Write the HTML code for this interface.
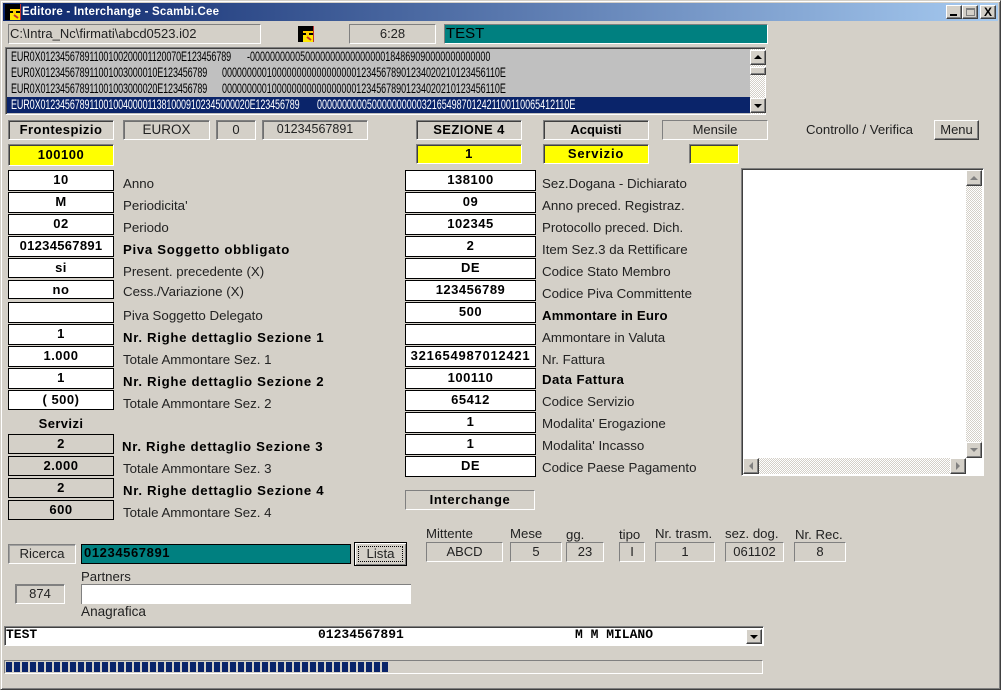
<!DOCTYPE html>
<html><head><meta charset="utf-8"><title>Editore</title>
<style>
html,body{margin:0;padding:0}
body{width:1001px;height:690px;overflow:hidden;background:#d4d0c8;position:relative;font-family:"Liberation Sans",sans-serif;font-size:13px;color:#000}
div,span.a{position:absolute;box-sizing:border-box;white-space:pre}
.s{border:1px solid;border-color:#808080 #fff #fff #808080;box-shadow:inset 1px 1px 0 #404040;text-align:center}
.t{border:1px solid;border-color:#808080 #fff #fff #808080;text-align:center;color:#222}
.b{border:1px solid #000;background:#fff;text-align:center;font-weight:bold;font-size:13px;letter-spacing:.5px;height:21px;line-height:18px;left:8px;width:106px}
.r{left:405px;width:131px;line-height:17px}
.g{background:#d4d0c8;height:20px;line-height:17px}
.y{background:#ff0;font-weight:bold;font-size:13px;letter-spacing:.5px;line-height:18px}
.l{left:123px;font-size:13.3px;line-height:16px;color:#222;margin-top:1px}
.h{font-weight:bold;font-size:13.2px;letter-spacing:.7px;color:#000}
.h2{letter-spacing:.45px}
.m{left:11px;font-size:13.5px;line-height:16px;color:#000;transform:scaleX(.667);transform-origin:0 0}
.f{letter-spacing:-.17px}
.btn{background:#d4d0c8;border:1px solid;border-color:#fff #404040 #404040 #fff;box-shadow:inset -1px -1px 0 #808080}
.tri{width:0;height:0;border-style:solid;border-color:transparent}
.c{background:repeating-conic-gradient(#fff 0 25%,#d4d0c8 0 50%) 0 0/2px 2px}
.lb{top:0;font-size:13.2px;color:#222;line-height:14px}
</style></head><body>

<!-- window frame -->
<div style="left:0;top:0;width:1001px;height:690px;border:1px solid;border-color:#d4d0c8 #404040 #404040 #d4d0c8;box-shadow:inset 1px 1px 0 #fff,inset -1px -1px 0 #808080"></div>
<div style="left:3px;top:3px;width:995px;height:18px;background:linear-gradient(90deg,#0a246a,#a6caf0)"></div>
<svg style="position:absolute;left:5px;top:4px" width="16" height="16" viewBox="0 0 16 16"><rect width="16" height="16" fill="#000"/><rect x="15" width="1" height="16" fill="#c03030"/><rect x="5" y="5" width="10" height="2" fill="#ffd000"/><rect x="5" y="9" width="10" height="7" fill="#ffe800"/><rect x="8" y="7" width="3" height="3" fill="#ffd000"/><path d="M9 11l4 3" stroke="#c03030" stroke-width="2"/></svg>
<div style="left:22px;top:4px;line-height:16px;color:#fff;font-weight:bold;font-size:11.5px;letter-spacing:.2px">Editore - Interchange - Scambi.Cee</div>
<div class="btn" style="left:946px;top:5px;width:16px;height:14px"><div style="left:3px;top:8px;width:7px;height:2px;background:#000"></div></div>
<div class="btn" style="left:962px;top:5px;width:16px;height:14px"><div style="left:3px;top:2px;width:9px;height:8px;border:1px solid #808080;border-top-width:2px"></div></div>
<div class="btn" style="left:980px;top:5px;width:16px;height:14px;font-weight:bold;font-size:12px;line-height:12px;text-align:center">X</div>

<!-- top row -->
<div class="t" style="left:8px;top:24px;width:253px;height:20px;text-align:left;padding-left:1px;line-height:17px;font-size:13px;color:#222">C:\Intra_Nc\firmati\abcd0523.i02</div>
<svg style="position:absolute;left:298px;top:26px" width="16" height="16" viewBox="0 0 16 16"><rect width="16" height="16" fill="#000"/><rect x="15" width="1" height="16" fill="#c03030"/><rect x="5" y="5" width="10" height="2" fill="#ffd000"/><rect x="5" y="9" width="10" height="7" fill="#ffe800"/><rect x="8" y="7" width="3" height="3" fill="#ffd000"/><path d="M9 11l4 3" stroke="#c03030" stroke-width="2"/></svg>
<div class="t" style="left:349px;top:24px;width:87px;height:20px;line-height:17px;font-size:13px">6:28</div>
<div class="t" style="left:444px;top:24px;width:324px;height:20px;background:#008080;text-align:left;padding-left:1px;line-height:18px;font-size:15px;color:#000">TEST</div>

<!-- list -->
<div class="s" style="left:5px;top:47px;width:761px;height:68px;background:#c0c0c0;overflow:hidden">
<div style="left:1px;top:49px;width:743px;height:16px;background:#0a246a"></div>
</div>
<div class="m f" style="top:49px">EUR0X01234567891100100200001120070E123456789</div>
<div class="m" style="top:49px;left:247px">-000000000050000000000000000184869090000000000000</div>
<div class="m f" style="top:65px">EUR0X012345678911001003000010E123456789</div>
<div class="m" style="top:65px;left:222px;letter-spacing:-.05px">00000000010000000000000000012345678901234020210123456110E</div>
<div class="m f" style="top:81px">EUR0X012345678911001003000020E123456789</div>
<div class="m" style="top:81px;left:222px;letter-spacing:-.05px">00000000010000000000000000012345678901234020210123456110E</div>
<div class="m f" style="top:97px;color:#fff">EUR0X0123456789110010040000113810009102345000020E123456789</div>
<div class="m" style="top:97px;left:317px;color:#fff;letter-spacing:-.03px">000000000050000000000321654987012421100110065412110E</div>
<div class="c" style="left:750px;top:49px;width:15px;height:65px"></div>
<div class="btn" style="left:750px;top:50px;width:16px;height:15px"><div class="tri" style="left:3px;top:4px;border-width:0 4px 4px;border-bottom-color:#000"></div></div>
<div class="btn" style="left:750px;top:67px;width:16px;height:8px"></div>
<div class="btn" style="left:750px;top:98px;width:16px;height:15px"><div class="tri" style="left:3px;top:5px;border-width:4px 4px 0;border-top-color:#000"></div></div>

<!-- header row -->
<div class="s" style="left:8px;top:120px;width:106px;height:20px;font-weight:bold;font-size:13px;letter-spacing:.45px;line-height:18px">Frontespizio</div>
<div class="s" style="left:123px;top:120px;width:87px;height:20px;line-height:17px;box-shadow:inset 1px 1px 0 #707070;color:#222;font-size:13.5px">EUROX</div>
<div class="s" style="left:216px;top:120px;width:40px;height:20px;line-height:17px;box-shadow:inset 1px 1px 0 #707070;color:#222">0</div>
<div class="s" style="left:262px;top:120px;width:106px;height:20px;line-height:17px;box-shadow:inset 1px 1px 0 #707070;color:#222;font-size:12.5px">01234567891</div>
<div class="s y" style="left:8px;top:144px;width:106px;height:22px;line-height:19px">100100</div>
<div class="s" style="left:416px;top:120px;width:106px;height:20px;font-weight:bold;font-size:13px;letter-spacing:.4px;line-height:18px">SEZIONE 4</div>
<div class="s" style="left:543px;top:120px;width:106px;height:20px;font-weight:bold;font-size:13px;line-height:18px">Acquisti</div>
<div class="s" style="left:662px;top:120px;width:106px;height:20px;line-height:17px;box-shadow:none;color:#222">Mensile</div>
<div class="s y" style="left:416px;top:144px;width:106px;height:20px">1</div>
<div class="s y" style="left:543px;top:144px;width:106px;height:20px;letter-spacing:.8px">Servizio</div>
<div class="s y" style="left:689px;top:144px;width:50px;height:20px"></div>
<div class="lb" style="left:806px;top:123px">Controllo / Verifica</div>
<div class="btn" style="left:934px;top:120px;width:45px;height:20px;text-align:center;line-height:17px;font-size:13px;color:#222">Menu</div>

<!-- left column -->
<div class="b" style="top:170px">10</div><div class="l" style="top:175px">Anno</div>
<div class="b" style="top:192px">M</div><div class="l" style="top:197px">Periodicita'</div>
<div class="b" style="top:214px">02</div><div class="l" style="top:219px">Periodo</div>
<div class="b" style="top:236px;letter-spacing:.3px">01234567891</div><div class="l h" style="top:241px">Piva Soggetto obbligato</div>
<div class="b" style="top:258px;height:20px">si</div><div class="l" style="top:263px">Present. precedente (X)</div>
<div class="b" style="top:280px;height:19px">no</div><div class="l" style="top:283px">Cess./Variazione (X)</div>
<div class="b" style="top:302px"></div><div class="l" style="top:307px">Piva Soggetto Delegato</div>
<div class="b" style="top:324px">1</div><div class="l h" style="top:329px">Nr. Righe dettaglio Sezione 1</div>
<div class="b" style="top:346px">1.000</div><div class="l" style="top:351px">Totale Ammontare Sez. 1</div>
<div class="b" style="top:368px">1</div><div class="l h" style="top:373px">Nr. Righe dettaglio Sezione 2</div>
<div class="b" style="top:390px;height:20px">( 500)</div><div class="l" style="top:395px">Totale Ammontare Sez. 2</div>
<div style="left:8px;top:416px;width:106px;text-align:center;font-weight:bold;font-size:13px;letter-spacing:.4px;line-height:16px">Servizi</div>
<div class="b g" style="top:434px">2</div><div class="l h" style="top:438px;left:122px">Nr. Righe dettaglio Sezione 3</div>
<div class="b g" style="top:456px">2.000</div><div class="l" style="top:460px">Totale Ammontare Sez. 3</div>
<div class="b g" style="top:478px">2</div><div class="l h" style="top:482px">Nr. Righe dettaglio Sezione 4</div>
<div class="b g" style="top:500px">600</div><div class="l" style="top:504px">Totale Ammontare Sez. 4</div>

<!-- middle column -->
<div class="b r" style="top:170px">138100</div><div class="l" style="left:542px;top:175px">Sez.Dogana - Dichiarato</div>
<div class="b r" style="top:192px">09</div><div class="l" style="left:542px;top:197px">Anno preced. Registraz.</div>
<div class="b r" style="top:214px">102345</div><div class="l" style="left:542px;top:219px">Protocollo preced. Dich.</div>
<div class="b r" style="top:236px">2</div><div class="l" style="left:542px;top:241px">Item Sez.3 da Rettificare</div>
<div class="b r" style="top:258px">DE</div><div class="l" style="left:542px;top:263px">Codice Stato Membro</div>
<div class="b r" style="top:280px">123456789</div><div class="l" style="left:542px;top:285px">Codice Piva Committente</div>
<div class="b r" style="top:302px">500</div><div class="l h h2" style="left:542px;top:307px;letter-spacing:.2px">Ammontare in Euro</div>
<div class="b r" style="top:324px"></div><div class="l" style="left:542px;top:329px">Ammontare in Valuta</div>
<div class="b r" style="top:346px;letter-spacing:.75px">321654987012421</div><div class="l" style="left:542px;top:351px">Nr. Fattura</div>
<div class="b r" style="top:368px">100110</div><div class="l h h2" style="left:542px;top:371px">Data Fattura</div>
<div class="b r" style="top:390px">65412</div><div class="l" style="left:542px;top:393px">Codice Servizio</div>
<div class="b r" style="top:412px">1</div><div class="l" style="left:542px;top:415px">Modalita' Erogazione</div>
<div class="b r" style="top:434px">1</div><div class="l" style="left:542px;top:437px">Modalita' Incasso</div>
<div class="b r" style="top:456px">DE</div><div class="l" style="left:542px;top:459px">Codice Paese Pagamento</div>
<div class="t" style="left:405px;top:490px;width:130px;height:20px;font-weight:bold;font-size:13px;letter-spacing:.65px;line-height:17px;color:#000">Interchange</div>

<!-- right textbox -->
<div class="s" style="left:741px;top:168px;width:243px;height:308px;background:#fff"></div>
<div class="c" style="left:966px;top:170px;width:16px;height:288px"></div>
<div class="btn" style="left:966px;top:170px;width:16px;height:16px"><div class="tri" style="left:3px;top:5px;border-width:0 4px 4px;border-bottom-color:#808080"></div></div>
<div class="btn" style="left:966px;top:442px;width:16px;height:16px"><div class="tri" style="left:3px;top:5px;border-width:4px 4px 0;border-top-color:#808080"></div></div>
<div class="c" style="left:743px;top:458px;width:223px;height:16px"></div>
<div class="btn" style="left:743px;top:458px;width:16px;height:16px"><div class="tri" style="left:5px;top:3px;border-width:4px 4px 4px 0;border-right-color:#808080"></div></div>
<div class="btn" style="left:950px;top:458px;width:16px;height:16px"><div class="tri" style="left:5px;top:3px;border-width:4px 0 4px 4px;border-left-color:#808080"></div></div>

<!-- transmission -->
<div class="lb" style="left:426px;top:527px">Mittente</div>
<div class="lb" style="left:510px;top:527px">Mese</div>
<div class="lb" style="left:566px;top:528px">gg.</div>
<div class="lb" style="left:619px;top:528px">tipo</div>
<div class="lb" style="left:655px;top:527px">Nr. trasm.</div>
<div class="lb" style="left:725px;top:527px">sez. dog.</div>
<div class="lb" style="left:795px;top:528px">Nr. Rec.</div>
<div class="t" style="left:426px;top:542px;width:77px;height:20px;line-height:17px">ABCD</div>
<div class="t" style="left:510px;top:542px;width:52px;height:20px;line-height:17px">5</div>
<div class="t" style="left:566px;top:542px;width:38px;height:20px;line-height:17px">23</div>
<div class="t" style="left:619px;top:542px;width:26px;height:20px;line-height:17px">I</div>
<div class="t" style="left:655px;top:542px;width:60px;height:20px;line-height:17px">1</div>
<div class="t" style="left:725px;top:542px;width:59px;height:20px;line-height:17px">061102</div>
<div class="t" style="left:794px;top:542px;width:52px;height:20px;line-height:17px">8</div>

<!-- search -->
<div class="s" style="left:8px;top:544px;width:68px;height:20px;line-height:17px;box-shadow:inset 1px 1px 0 #a0a0a0;color:#222;font-size:13.3px">Ricerca</div>
<div style="left:81px;top:544px;width:270px;height:20px;background:#008080;border:1px solid #000;padding-left:2px;font-weight:bold;font-size:13px;letter-spacing:.6px;line-height:16px">01234567891</div>
<div style="left:354px;top:542px;width:53px;height:24px;background:#d4d0c8;border:1px solid #000;box-shadow:inset 1px 1px 0 #fff,inset -1px -1px 0 #808080"><div style="left:3px;top:3px;width:45px;height:16px;border:1px dotted #000;text-align:center;line-height:14px;font-size:13.3px;color:#222">Lista</div></div>
<div class="lb" style="left:81px;top:570px">Partners</div>
<div class="t" style="left:15px;top:584px;width:50px;height:20px;line-height:17px;box-shadow:inset 1px 1px 0 #808080">874</div>
<div style="left:81px;top:584px;width:330px;height:20px;background:#fff;border-left:1px solid #808080;border-top:1px solid #808080"></div>
<div class="lb" style="left:81px;top:605px;font-size:13.6px">Anagrafica</div>

<!-- combo -->
<div class="s" style="left:4px;top:626px;width:760px;height:20px;background:#fff"></div>
<div style="left:6px;top:627px;font-family:'Liberation Mono',monospace;font-weight:bold;font-size:13px;line-height:16px">TEST</div>
<div style="left:318px;top:627px;font-family:'Liberation Mono',monospace;font-weight:bold;font-size:13px;line-height:16px">01234567891</div>
<div style="left:575px;top:627px;font-family:'Liberation Mono',monospace;font-weight:bold;font-size:13px;line-height:16px">M M MILANO</div>
<div class="btn" style="left:746px;top:629px;width:16px;height:15px"><div class="tri" style="left:3px;top:5px;border-width:4px 4px 0;border-top-color:#000"></div></div>

<!-- progress -->
<div style="left:4px;top:660px;width:759px;height:14px;border:1px solid;border-color:#808080 #fff #fff #808080"></div>
<div style="left:6px;top:662px;width:383px;height:10px;background:repeating-linear-gradient(90deg,#0a246a 0 6px,transparent 6px 8px)"></div>

</body></html>
